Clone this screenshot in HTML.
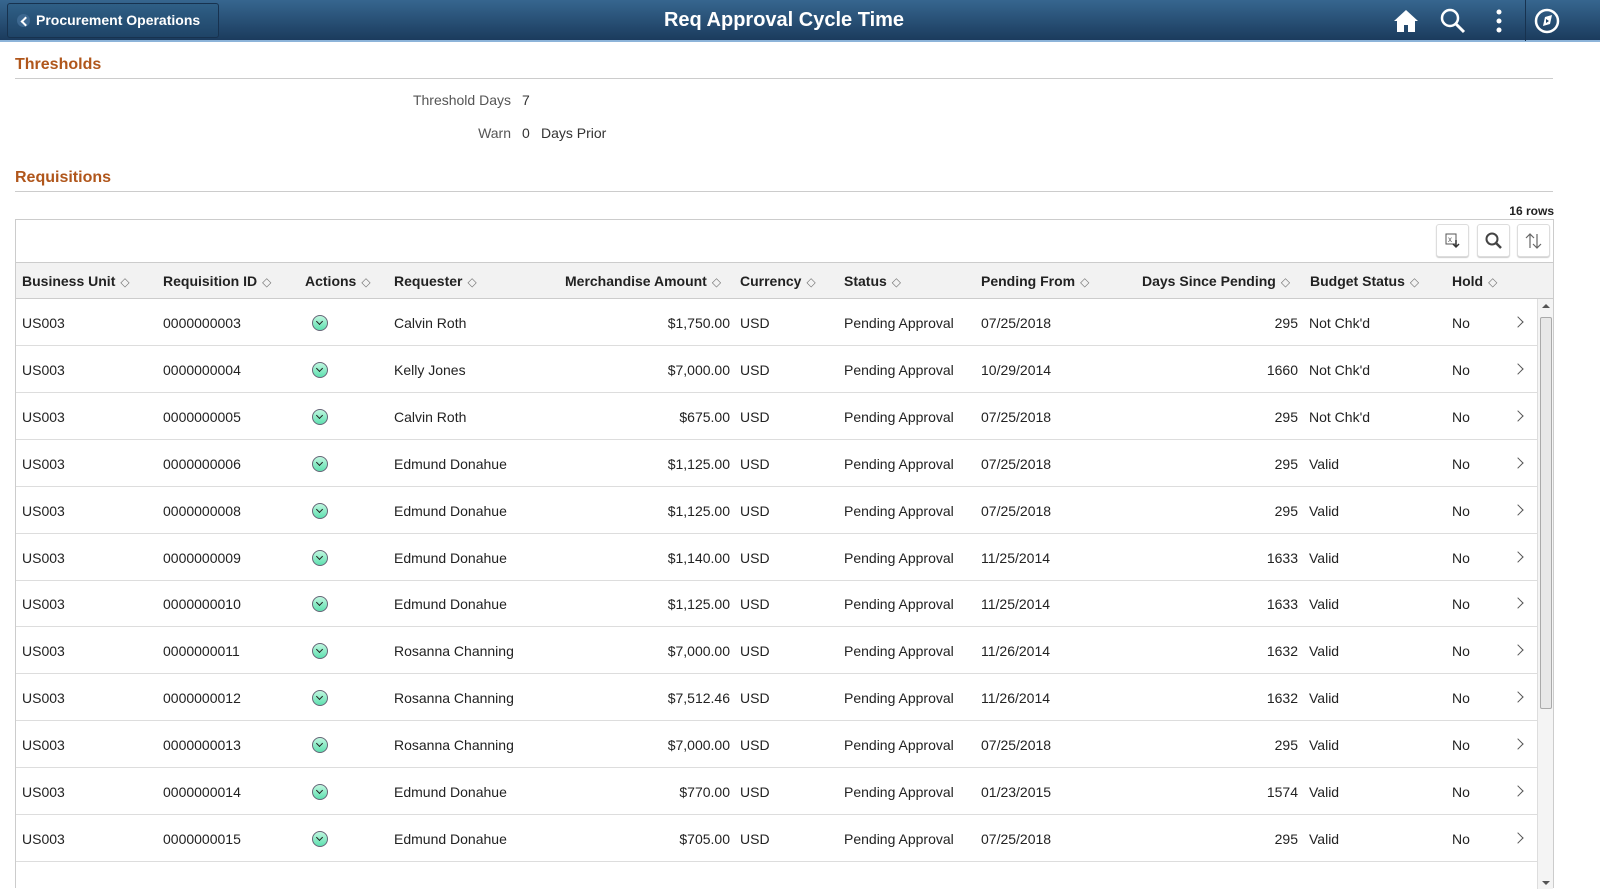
<!DOCTYPE html>
<html><head><style>
*{box-sizing:border-box;margin:0;padding:0}
body{width:1600px;height:888px;overflow:hidden;background:#fff;font-family:"Liberation Sans",Arial,sans-serif;color:#333;position:relative}
.hdr{position:absolute;left:0;top:0;width:1600px;height:42px;background:linear-gradient(#36668f,#1b3b5d);border-bottom:2px solid #8db4d9}
.back{position:absolute;left:7px;top:3px;width:212px;height:35px;border:1px solid #17324f;border-radius:3px;background:linear-gradient(#2f5f86,#1f4467);color:#fff;font-weight:bold;font-size:14px;line-height:33px;padding-left:28px}
.back:before{content:"";position:absolute;left:9px;top:10px;width:13px;height:13px;border-radius:50%;background:#3d6890}
.back:after{content:"";position:absolute;left:14px;top:14px;width:5px;height:5px;border-left:2px solid #fff;border-bottom:2px solid #fff;transform:rotate(45deg)}
.title{position:absolute;left:0;width:1568px;top:9px;text-align:center;color:#fff;font-weight:bold;font-size:20px}
.sec{position:absolute;left:15px;width:1538px;border-bottom:1px solid #ccc;color:#b0561b;font-weight:bold;font-size:16px;padding-bottom:4px}
.lbl{position:absolute;font-size:14px;color:#555;text-align:right}
.v{position:absolute;font-size:14px;color:#333}
.tbl{position:absolute;left:15px;top:219px;width:1539px;height:669px;border:1px solid #ccc;border-bottom:none}
.th{position:absolute;left:0;top:42px;width:1537px;height:37px;background:#f2f2f2;border-top:1px solid #ccc;border-bottom:1px solid #ccc}
.th span{position:absolute;top:10px;font-weight:bold;font-size:14px;color:#222;white-space:nowrap}
.th span:after{content:"◇";font-weight:normal;color:#777;font-size:12px;margin-left:5px}
.btn{position:absolute;top:4px;width:33px;height:33px;border:1px solid #ddd;border-radius:3px;background:#fff;box-shadow:0 1px 1px #ccc}
.row{position:absolute;left:0;width:1521px;height:47px;border-bottom:1px solid #ddd;font-size:14px;color:#222}
.row span{position:absolute;top:16px;white-space:nowrap}
.r{text-align:right}
.act{position:absolute;top:16px;width:16px;height:16px;border-radius:50%;border:1px solid #667;background:linear-gradient(#bff7df,#5fe0b0)}
.act:after{content:"";position:absolute;left:4px;top:3px;width:4px;height:4px;border-right:1.5px solid #222;border-bottom:1.5px solid #222;transform:rotate(45deg)}
.chev{position:absolute;top:19px;width:8px;height:8px;border-right:1.5px solid #555;border-top:1.5px solid #555;transform:rotate(45deg)}
.sb{position:absolute;left:1521px;top:79px;width:16px;height:590px;background:#f4f4f4;border-left:1px solid #ddd}
.thumb{position:absolute;left:2px;top:18px;width:12px;height:392px;background:#e8e8e8;border:1px solid #aaa;border-radius:2px}
</style></head><body>
<div class="hdr">
<div class="back">Procurement Operations</div>
<div class="title">Req Approval Cycle Time</div>
<svg style="position:absolute;left:1393px;top:8px" width="26" height="25" viewBox="0 0 26 25"><path d="M13 2L1 13h3v11h7v-7h4v7h7V13h3z" fill="#fff"/></svg>
<svg style="position:absolute;left:1440px;top:8px" width="26" height="26" viewBox="0 0 26 26"><circle cx="10" cy="10" r="8" stroke="#fff" stroke-width="2.5" fill="none"/><path d="M16 16l8 8" stroke="#fff" stroke-width="3"/></svg>
<svg style="position:absolute;left:1494px;top:9px" width="10" height="24"><circle cx="5" cy="3" r="2.5" fill="#fff"/><circle cx="5" cy="12" r="2.5" fill="#fff"/><circle cx="5" cy="21" r="2.5" fill="#fff"/></svg>
<div style="position:absolute;left:1525px;top:0;width:1px;height:41px;background:#17324f"></div>
<svg style="position:absolute;left:1534px;top:8px" width="26" height="26" viewBox="0 0 26 26"><circle cx="13" cy="13" r="11" stroke="#fff" stroke-width="2.5" fill="none"/><path d="M9 18l2-9 7-2-2 9z" fill="#fff"/><path d="M12 11l3 2-3 2z" fill="#1f4467"/></svg>
</div>
<div class="sec" style="top:56px">Thresholds</div>
<div class="lbl" style="left:380px;width:131px;top:92px">Threshold Days</div><div class="v" style="left:522px;top:92px">7</div>
<div class="lbl" style="left:380px;width:131px;top:125px">Warn</div><div class="v" style="left:522px;top:125px">0</div><div class="v" style="left:541px;top:125px">Days Prior</div>
<div class="sec" style="top:169px">Requisitions</div>
<div style="position:absolute;right:46px;top:204px;font-size:12px;font-weight:bold;color:#222">16 rows</div>
<div class="tbl">
<div class="btn" style="left:1420px"><svg width="31" height="31"><rect x="9" y="9" width="10" height="10" fill="none" stroke="#555"/><text x="11" y="17" font-size="8" fill="#555" font-family="Liberation Sans">x</text><path d="M19 15v7M16 19l3 3 3-3" stroke="#333" stroke-width="1.5" fill="none"/></svg></div>
<div class="btn" style="left:1461px"><svg width="31" height="31"><circle cx="14" cy="14" r="5.5" stroke="#444" stroke-width="2" fill="none"/><path d="M18 18l5 5" stroke="#444" stroke-width="2.5"/></svg></div>
<div class="btn" style="left:1501px"><svg width="31" height="31"><path d="M12 9v14M8 13l4-4 4 4M19 9v14M15 19l4 4 4-4" stroke="#666" stroke-width="1.2" fill="none"/></svg></div>
<div class="th">
<span style="left:6px">Business Unit</span><span style="left:147px">Requisition ID</span><span style="left:289px">Actions</span><span style="left:378px">Requester</span><span style="left:549px">Merchandise Amount</span><span style="left:724px">Currency</span><span style="left:828px">Status</span><span style="left:965px">Pending From</span><span style="left:1126px">Days Since Pending</span><span style="left:1294px">Budget Status</span><span style="left:1436px">Hold</span>
</div>
<div id="rows"></div>
<div class="sb"><div style="position:absolute;left:4px;top:5px;border:4px solid transparent;border-bottom:4px solid #555;border-top:none"></div><div class="thumb"></div><div style="position:absolute;left:4px;bottom:4px;border:4px solid transparent;border-top:4px solid #555;border-bottom:none"></div></div>
</div>
<script>
var d=[["0000000003","Calvin Roth","$1,750.00","07/25/2018","295","Not Chk'd"],["0000000004","Kelly Jones","$7,000.00","10/29/2014","1660","Not Chk'd"],["0000000005","Calvin Roth","$675.00","07/25/2018","295","Not Chk'd"],["0000000006","Edmund Donahue","$1,125.00","07/25/2018","295","Valid"],["0000000008","Edmund Donahue","$1,125.00","07/25/2018","295","Valid"],["0000000009","Edmund Donahue","$1,140.00","11/25/2014","1633","Valid"],["0000000010","Edmund Donahue","$1,125.00","11/25/2014","1633","Valid"],["0000000011","Rosanna Channing","$7,000.00","11/26/2014","1632","Valid"],["0000000012","Rosanna Channing","$7,512.46","11/26/2014","1632","Valid"],["0000000013","Rosanna Channing","$7,000.00","07/25/2018","295","Valid"],["0000000014","Edmund Donahue","$770.00","01/23/2015","1574","Valid"],["0000000015","Edmund Donahue","$705.00","07/25/2018","295","Valid"]];
var h="";d.forEach(function(r,i){var t=79+i*46.9;h+='<div class="row" style="top:'+t+'px"><span style="left:6px">US003</span><span style="left:147px">'+r[0]+'</span><i class="act" style="left:296px"></i><span style="left:378px">'+r[1]+'</span><span class="r" style="right:807px">'+r[2]+'</span><span style="left:724px">USD</span><span style="left:828px">Pending Approval</span><span style="left:965px">'+r[3]+'</span><span class="r" style="right:239px">'+r[4]+'</span><span style="left:1293px">'+r[5]+'</span><span style="left:1436px">No</span><i class="chev" style="left:1498px"></i></div>'});
document.getElementById("rows").innerHTML=h;
</script>
</body></html>
